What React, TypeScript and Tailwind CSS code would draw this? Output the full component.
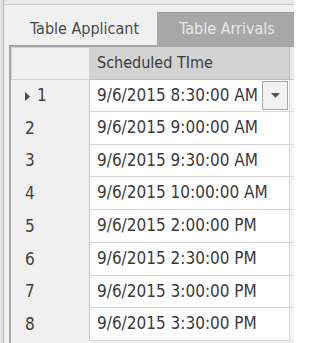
import React from "react";

const rows = [
  { n: "1", t: "9/6/2015 8:30:00 AM", h: "h-[32px]" },
  { n: "2", t: "9/6/2015 9:00:00 AM", h: "h-[33px]" },
  { n: "3", t: "9/6/2015 9:30:00 AM", h: "h-[32px]" },
  { n: "4", t: "9/6/2015 10:00:00 AM", h: "h-[33px]" },
  { n: "5", t: "9/6/2015 2:00:00 PM", h: "h-[33px]" },
  { n: "6", t: "9/6/2015 2:30:00 PM", h: "h-[33px]" },
  { n: "7", t: "9/6/2015 3:00:00 PM", h: "h-[32px]" },
  { n: "8", t: "9/6/2015 3:30:00 PM", h: "h-[33px]" },
];

const font = { fontFamily: '"DejaVu Sans Condensed", "DejaVu Sans", sans-serif', fontStretch: "condensed" as const };

export default function App() {
  return (
    <div className="w-[294px] h-[343px] flex bg-[#f0f0f0] overflow-hidden" style={font}>
      <div className="w-[4px] shrink-0 bg-[#e2e2e2] border-r border-[#b4b4b4]" />
      <div className="flex-1 flex flex-col min-w-0">
        <div className="h-[5px] shrink-0 bg-[#e9e9e9] border-b border-[#c8c8c8]" />
        <div className="h-[40px] shrink-0 flex items-end pl-[5px]">
          <div className="w-[148px] h-[33px] flex items-center justify-center text-[16px] text-[#4a4a4a] pl-[3px]">
            Table Applicant
          </div>
          <div className="flex-1 h-[33px] flex items-center justify-center text-[16px] text-[#e8e8e8] bg-[#a7a7a7] border-t border-[#9a9a9a] pl-[3px]">
            Table Arrivals
          </div>
        </div>
        <div className="ml-[5px] flex-1 border-l-2 border-t-2 border-[#a6a6a6] bg-[#f0f0f0] flex flex-col">
          <div className="h-[33px] shrink-0 flex">
            <div className="w-[79px] shrink-0 bg-[#f0f0f0] border border-[#d2d2d2]" />
            <div className="w-[200px] shrink-0 bg-[#d3d3d3] border-r border-b border-[#bcbcbc] flex items-center pl-[7px] text-[16px] text-[#3c3c3c]">
              Scheduled TIme
            </div>
            <div className="flex-1 bg-[#e8e8e8] border-b border-[#c8c8c8]" />
          </div>
          {rows.map((r, i) => (
            <div key={r.n} className={`${r.h} shrink-0 flex`}>
              <div className="w-[79px] shrink-0 bg-[#f0f0f0] border-r border-[#c8c8c8] flex items-center pl-[14px] text-[17px] text-[#404040]">
                {i === 0 ? (
                  <>
                    <svg width="5" height="9" viewBox="0 0 5 9" className="mr-[7px]">
                      <path d="M0 0 L5 4.5 L0 9 Z" fill="#4a4a4a" />
                    </svg>
                    <span>{r.n}</span>
                  </>
                ) : (
                  <span>{r.n}</span>
                )}
              </div>
              <div className="w-[200px] shrink-0 bg-white border-r border-b border-[#d6d6d6] flex items-center pl-[7px] text-[17px] text-[#3a3a3a]">
                <span>{r.t}</span>
                {i === 0 && (
                  <div className="ml-auto mr-[1px] w-[26px] h-[29px] border border-[#a8a8a8] bg-[#f2f2f2] flex items-center justify-center">
                    <svg width="9" height="5" viewBox="0 0 9 5">
                      <path d="M0 0 L9 0 L4.5 5 Z" fill="#555555" />
                    </svg>
                  </div>
                )}
              </div>
              <div className="flex-1 bg-[#f4f4f4] border-b border-[#dcdcdc]" />
            </div>
          ))}
        </div>
      </div>
    </div>
  );
}
